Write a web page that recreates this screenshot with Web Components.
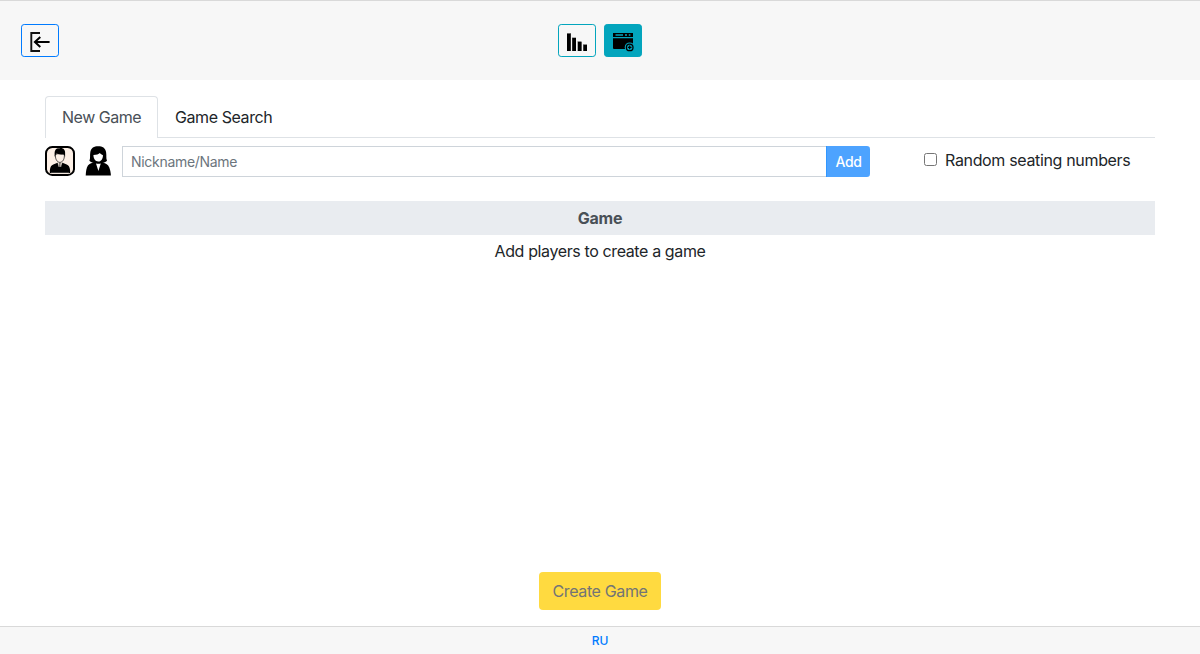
<!DOCTYPE html>
<html lang="en">
<head>
<meta charset="utf-8">
<title>New Game</title>
<style>
html,body{height:100%;margin:0}
body{font:400 16px/24px Inter,"Liberation Sans",sans-serif;color:#212529;background:#fff;overflow:hidden}
</style>
</head>
<body>
<game-app></game-app>
<script>
function define(name, html) {
  const t = document.createElement('template');
  t.innerHTML = html;
  customElements.define(name, class extends HTMLElement {
    constructor() {
      super();
      this.attachShadow({mode: 'open'}).append(t.content.cloneNode(true));
    }
  });
}

define('icon-button', `
<style>
:host{display:block;box-sizing:border-box;width:38px;height:33px;border:1px solid #03a5bd;border-radius:3.2px;color:#000}
:host([kind=primary]){border-color:#007bff}
:host([active]){background:#03a5bd}
::slotted(svg){display:block;width:36px;height:31px}
</style><slot></slot>`);

define('top-bar', `
<style>
:host{display:grid;grid-template-columns:1fr auto 1fr;box-sizing:border-box;height:80px;padding:23px 21px 0;border-top:1px solid #d9d9d9;background:#f7f7f7}
.mid{display:flex;gap:8px}
</style>
<icon-button kind="primary"><svg viewBox="0 0 36 31"><path d="M18 8H9.3v18H18" fill="none" stroke="#111" stroke-width="1.9"/><path d="M27.6 17H13.5M18.3 12 12.9 17l5.4 5" fill="none" stroke="#000" stroke-width="2"/></svg></icon-button>
<div class="mid">
<icon-button><svg viewBox="0 0 36 31"><path d="M8 8h4v18H8zM13 12.4h4V26h-4zM18.5 16.2h4V26h-4zM24 19.2h4V26h-4z" fill="#666"/><path d="M8 9h3.6v17H8zM13.4 13H17v13h-3.6zM19 17h3.5v9H19zM24.6 20H28v6h-3.4z"/></svg></icon-button>
<icon-button active><svg viewBox="0 0 36 31"><path d="M8 8h20v4H8zM8 13.3h20v10.7H9a1 1 0 0 1-1-1z"/><path d="M10.5 10H18M20 10h2M23.8 10h1.6" stroke="#03a5bd" stroke-width="1.7"/><path d="M27.5 19.5H30V26h-7z" fill="#03a5bd"/><circle cx="24.7" cy="22.4" r="5" fill="#03a5bd"/><circle cx="24.7" cy="22.4" r="3.3" fill="#03a5bd" stroke="#000" stroke-width="1.3"/><path d="M22.9 22.4h3.6M24.7 20.6v3.6" stroke="#000" stroke-width="1.2"/></svg></icon-button>
</div>`);

define('tab-item', `
<style>
:host{display:block;box-sizing:border-box;height:42px;padding:8px 0 8px 16px;border:1px solid transparent;border-bottom:0;border-radius:4px 4px 0 0;white-space:nowrap;letter-spacing:-.42px}
:host([active]){width:113px;border-color:#dee2e6;background:#fff;color:#495057;letter-spacing:-.48px}
</style><slot></slot>`);

define('tab-list', `
<style>
:host{display:flex;height:42px;box-shadow:inset 0 -1px #dee2e6}
</style><slot></slot>`);

define('gender-picker', `
<style>
:host{display:flex;width:77px;height:31px}
svg{display:block;width:30px;height:30px}
svg+svg{margin-left:8px}
</style>
<svg viewBox="0 0 30 30"><rect x="1" y="1" width="28" height="28" rx="6.3" fill="#fdf0e6" stroke="#000" stroke-width="2"/>
<path d="M4.8 27c-.2-4.7 1-7.5 3.5-8.4l4.2-1.8h5l4.2 1.8c2.4.9 3.7 3.7 3.5 8.4z"/>
<path d="M10.4 9.6c0 4.2 2.2 6.8 4.5 6.8s4.5-2.6 4.5-6.8l-1-1.8h-7z" fill="#fdf0e6" stroke="#000" stroke-width=".7"/>
<path d="M9.6 10.8V7c0-3.4 2.2-5 4.4-4.6 3.4-1.4 6.4 1 6.1 4.6v3.8l-1.4-2.6c-3 .5-6 .1-7-.9z"/>
<path d="m12.8 16.6 1.3 4.4.3-3.6zM17 16.6 15.7 21l-.3-3.6z" fill="#fdf0e6" stroke="#fdf0e6" stroke-width=".4"/><path d="M6 26.7h18" stroke="#888" stroke-width=".5"/></svg>
<svg viewBox="0 0 30 30"><path d="M2.7 29.5c.3-6.7 1.5-11 5.3-12.2l3-.9h8l3 .9c3.8 1.2 5.4 5.5 5.9 12.2z"/>
<path d="M6.4 14.7C7.6 12 6.7 9.8 7.3 6.2 8 1.9 11 .3 15.2.3s7.2 1.6 7.9 5.9c.6 3.6-.3 5.9.9 8.5-2 3.4-15.6 3.4-17.6 0z"/>
<path d="M10.4 9.1c3.2-.1 5.2-.8 6.5-2 .8 1 1.8 1.8 3.1 2.1-.2 4-2 6.3-4.8 6.3s-4.6-2.4-4.8-6.4zM13 17.4c1.6.5 3.2.5 4.8 0L15.4 25z" fill="#fff"/></svg>`);

define('name-field', `
<style>
:host{display:flex;width:748px;height:31px}
input{box-sizing:border-box;width:704px;height:31px;margin:0;padding:4px 8px;border:1px solid #ced4da;border-right:0;border-radius:0;background:#fff;font:400 14px/21px Inter,sans-serif;letter-spacing:-.3px;outline:0}
input::placeholder{color:#6c757d;opacity:1}
button{box-sizing:border-box;width:44px;height:31px;margin:0;padding:0;border:0;border-left:1px solid #3297ff;border-radius:0 3.2px 3.2px 0;background:#4da3ff;color:#fff;font:500 14px/21px Inter,sans-serif;letter-spacing:-.4px}
</style>
<input type="text" placeholder="Nickname/Name"><button>Add</button>`);

define('check-option', `
<style>
:host{display:flex;margin:2px 0 0 54px;letter-spacing:-.34px;white-space:nowrap}
input{width:13px;height:13px;margin:5px 8px 0 0}
</style>
<input type="checkbox"><label><slot></slot></label>`);

define('game-table', `
<style>
:host{display:block;margin-top:24px;text-align:center}
.head{height:34px;line-height:35px;background:#e9ecf0;color:#495057;font-weight:700;letter-spacing:-.2px}
.body{height:34px;line-height:33px;letter-spacing:-.38px}
</style>
<div class="head"><slot name="head"></slot></div><div class="body"><slot></slot></div>`);

define('create-button', `
<style>
:host{display:block;margin:auto auto 16px}
button{box-sizing:border-box;width:122px;height:38px;margin:0;padding:0;border:0;border-radius:4px;background:#ffda40;color:#727476;font:400 16px/24px Inter,sans-serif;letter-spacing:-.36px;display:block}
</style><button><slot></slot></button>`);

define('page-footer', `
<style>
:host{display:block;box-sizing:border-box;height:28px;border-top:1px solid #d9d9d9;background:#f7f7f7;text-align:center;font-size:12px;font-weight:500;line-height:28px}
a{color:#007bff;text-decoration:none}
</style><a><slot></slot></a>`);

define('game-app', `
<style>
:host{display:flex;flex-direction:column;height:100vh}
main{flex:1;display:flex;flex-direction:column;padding:16px 45px 0}
.entry{display:flex;margin-top:8px;height:31px}
</style>
<top-bar></top-bar>
<main>
<tab-list><tab-item active>New Game</tab-item><tab-item>Game Search</tab-item></tab-list>
<div class="entry"><gender-picker></gender-picker><name-field></name-field><check-option>Random seating numbers</check-option></div>
<game-table><span slot="head">Game</span>Add players to create a game</game-table>
<create-button>Create Game</create-button>
</main>
<page-footer>RU</page-footer>`);
</script>
</body>
</html>
